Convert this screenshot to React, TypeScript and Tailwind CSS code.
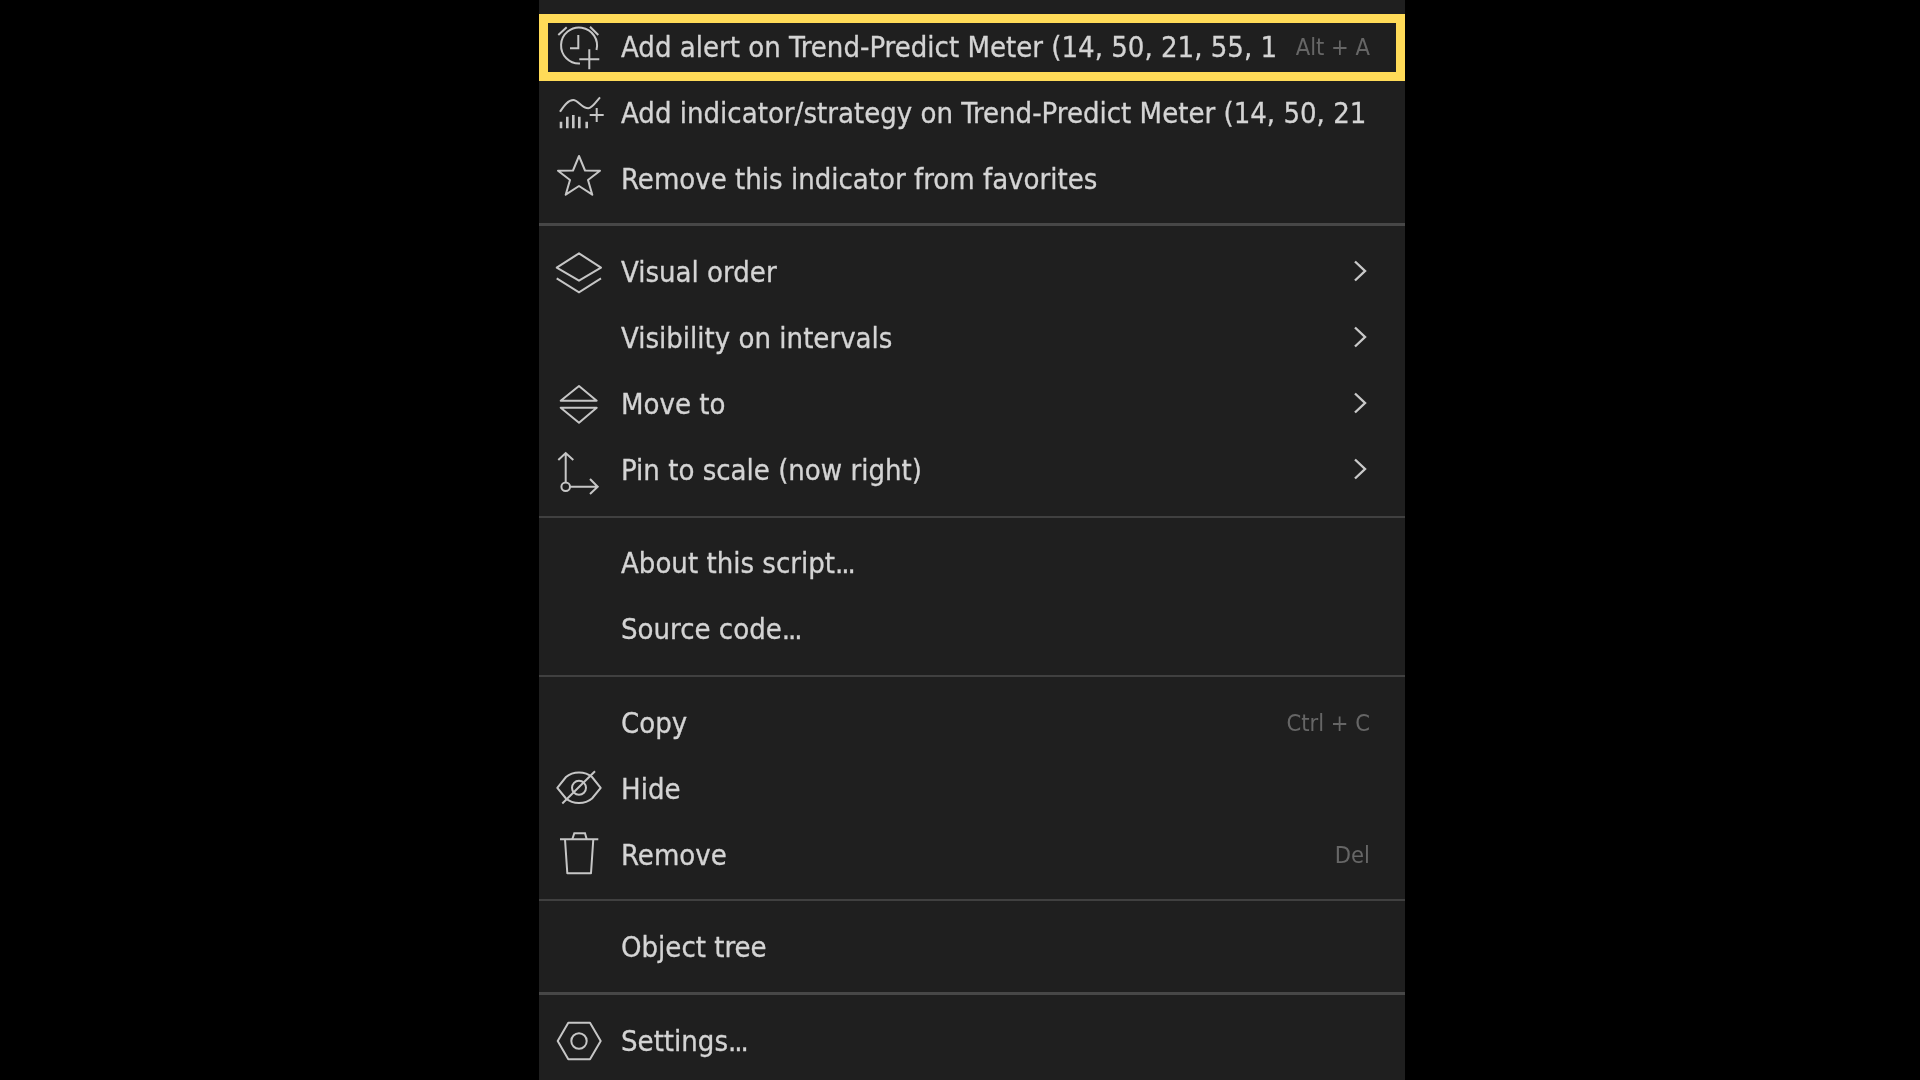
import React from "react";

const Icon = ({ children }: { children?: React.ReactNode }) => (
  <svg width="48" height="48" viewBox="0 0 48 48" fill="none" stroke="#c6c6c6" strokeWidth="2" className="overflow-visible shrink-0">
    {children}
  </svg>
);

const Alarm = () => (
  <Icon>
    <path d="M26 41.5A18 18 0 1 1 42.5 28" />
    <path d="M24.3 13V26.3H16" />
    <path d="M35.3 27.3V47.3M25.3 37.3H45.3" />
    <path d="M4.3 13L12.7 5.3M36 4.7L44.3 13" />
  </Icon>
);
const ChartPlus = () => (
  <Icon>
    <path d="M6 23.7C10 18 14 12 19.3 12C24 12 28 20.3 34.3 20.3C38 20.3 42 14 46 9.3" />
    <path strokeWidth="2.6" d="M7 40.3V33.7M13.3 40.3V28.7M19.3 40.3V27M25.3 40.3V28.7M32.7 40.3V33.7" />
    <path d="M42.7 20V34M35.7 27H49.7" />
  </Icon>
);
const Star = () => (
  <Icon>
    <path strokeLinejoin="round" d="M25 2L31 16.5L46 16.7L34 26L38.3 40.7L25 32L11.7 40.7L16 26L4 16.7L19 16.5Z" />
  </Icon>
);
const Layers = () => (
  <Icon>
    <path strokeLinejoin="round" d="M2.7 20.7L25 6.3L47 20.7L25 33.7Z" />
    <path d="M2.7 31.3L25 45.3L47 31.3" />
  </Icon>
);
const MoveTo = () => (
  <Icon>
    <path strokeLinejoin="round" d="M6.7 21.7L25 7L42.7 21.7Z" />
    <path strokeLinejoin="round" d="M6.7 28.7H42.7L25 43.7Z" />
  </Icon>
);
const Pin = () => (
  <Icon>
    <path d="M11.7 37.4V8.3M4.3 15L11.7 8L19.3 15" />
    <circle cx="11.7" cy="41.7" r="4.3" />
    <path d="M16 41.7H43.7M36 34L43.7 41.7L36 49" />
  </Icon>
);
const Eye = () => (
  <Icon>
    <path strokeLinejoin="round" d="M3.3 23.8L12 13C16 9.5 20 8.5 25 8.5C30 8.5 34 9.5 38 13L46.7 23.8L38 34.5C34 38 30 39 25 39C20 39 16 38 12 34.5Z" />
    <circle cx="25" cy="23.8" r="7" />
    <path d="M8.3 39.5L41 7.2" />
  </Icon>
);
const Trash = () => (
  <Icon>
    <path d="M6 9.3H44.3" />
    <path d="M18.3 9.3L20.3 3.3H31L32.7 9.3" />
    <path strokeLinejoin="round" d="M11 9.3L13.3 43.3H37L39.3 9.3" />
  </Icon>
);
const Gear = () => (
  <Icon>
    <path strokeLinejoin="round" d="M3.7 25L14.3 6.7H36L46.7 25L36 43.3H14.3Z" />
    <circle cx="25" cy="25" r="7.7" />
  </Icon>
);

const Chevron = () => (
  <svg width="16" height="24" viewBox="0 0 16 24" fill="none" stroke="#c9c9c9" strokeWidth="2.4" className="shrink-0">
    <path d="M3 2.5L13 12L3 21.5" />
  </svg>
);

type RowProps = { icon?: React.ReactNode; label: string; dots?: boolean; shortcut?: string; arrow?: boolean };

const Row = ({ icon, label, dots, shortcut, arrow }: RowProps) => (
  <div className="flex h-[66px] items-center pl-[15px] pr-[35px]">
    <div className="flex h-12 w-[48px] shrink-0 items-center justify-center">{icon}</div>
    <div className="ml-[19px] min-w-0 flex-1 overflow-hidden whitespace-nowrap pt-[2px] text-[29px] leading-[64px] text-[#d4d4d4] [-webkit-text-stroke:0.3px_#d4d4d4]">
      {label}
      {dots && <span className="tracking-[-2px]">...</span>}
    </div>
    {shortcut && <div className="ml-4 shrink-0 pt-[4px] text-[23.5px] text-[#666666]">{shortcut}</div>}
    {arrow && <div className="mr-[2px]"><Chevron /></div>}
  </div>
);

export default function App() {
  return (
    <div className="flex h-[1080px] w-full justify-center overflow-hidden bg-black font-['DejaVu_Sans_Condensed','DejaVu_Sans',sans-serif]">
      <div className="relative ml-[24px] h-[1080px] w-[866px] overflow-hidden bg-[#1f1f1f] blur-[0.4px]">
        <div className="pb-[12px] pt-[13px]">
          <Row icon={<Alarm />} label="Add alert on Trend-Predict Meter (14, 50, 21, 55, 1" shortcut="Alt + A" />
          <Row icon={<ChartPlus />} label="Add indicator/strategy on Trend-Predict Meter (14, 50, 21" />
          <Row icon={<Star />} label="Remove this indicator from favorites" />
        </div>
        <div className="h-[3px] bg-[#474747]" />
        <div className="pb-[14px] pt-[12px]">
          <Row icon={<Layers />} label="Visual order" arrow />
          <Row label="Visibility on intervals" arrow />
          <Row icon={<MoveTo />} label="Move to" arrow />
          <Row icon={<Pin />} label="Pin to scale (now right)" arrow />
        </div>
        <div className="h-[2px] bg-[#404040]" />
        <div className="pb-[14px] pt-[11px]">
          <Row label="About this script" dots />
          <Row label="Source code" dots />
        </div>
        <div className="h-[2px] bg-[#404040]" />
        <div className="pb-[12px] pt-[12px]">
          <Row label="Copy" shortcut="Ctrl + C" />
          <Row icon={<Eye />} label="Hide" />
          <Row icon={<Trash />} label="Remove" shortcut="Del" />
        </div>
        <div className="h-[2px] bg-[#404040]" />
        <div className="pb-[13px] pt-[12px]">
          <Row label="Object tree" />
        </div>
        <div className="h-[3px] bg-[#474747]" />
        <div className="pt-[12px]">
          <Row icon={<Gear />} label="Settings" dots />
        </div>
        <div className="absolute left-0 top-[14px] h-[67px] w-[866px] border-[9px] border-[#ffdb58]" />
      </div>
    </div>
  );
}
